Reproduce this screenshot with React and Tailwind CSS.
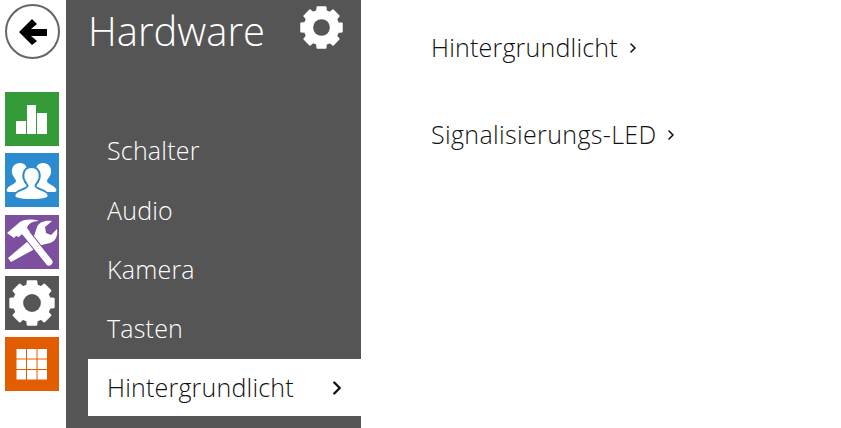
import { ChevronRight } from 'lucide-react';

// 8 tooth gear outline, centred on 27,27 in a 54 box
function gearPoints(outer, inner) {
  const pts = [];
  for (let i = 0; i < 8; i++) {
    const a = (i * Math.PI) / 4 - Math.PI / 2;
    [[-0.2, outer], [0.2, outer], [0.27, inner], [0.52, inner]].forEach(([d, r]) => {
      pts.push(`${(27 + r * Math.cos(a + d)).toFixed(2)},${(27 + r * Math.sin(a + d)).toFixed(2)}`);
    });
  }
  return pts.join(' ');
}

function Gear({ className, hole }) {
  return (
    <svg viewBox="0 0 54 54" className={className}>
      <polygon points={gearPoints(25, 20.5)} fill="#fff" stroke="#fff" strokeWidth="2" strokeLinejoin="round" />
      <circle cx="27" cy="27" r="10" fill={hole} />
    </svg>
  );
}

function Tile({ color, children }) {
  return <div className={`w-[54px] h-[54px] flex items-center justify-center ${color}`}>{children}</div>;
}

const menu = ['Schalter', 'Audio', 'Kamera', 'Tasten'];

export default function App() {
  return (
    <div className="flex w-[841px] h-[428px] bg-white overflow-hidden font-['Open_Sans',sans-serif] font-light">
      <div className="w-[66px] shrink-0 pl-[5px] pt-[4px]">
        <div className="w-[55px] h-[55px] rounded-full border-2 border-[#666666] flex items-center justify-center">
          <svg viewBox="0 0 28 28" className="w-[28px] h-[28px]">
            <path fill="#000" d="M0 14 13 1l5 5-6 5h16v7H12l6 5-5 4z" />
          </svg>
        </div>
        <div className="flex flex-col gap-[7.25px] mt-[33px]">
          <Tile color="bg-[#359b38]">
            <svg viewBox="0 0 54 54" className="w-[54px] h-[54px]">
              <path fill="#fff" d="M11 29h10v13H11zM22 13h9v29h-9zM32 21h10v21H32z" />
            </svg>
          </Tile>
          <Tile color="bg-[#2d8ccf]">
            <svg viewBox="0 0 54 54" className="w-[54px] h-[54px]">
              <g fill="#fff">
                <path d="M15 10c5 0 8 4 7 10-1 4-3 6-3 8 0 3 4 3 5 6l-6 5H4c-2 0-3-1-2-3 2-4 9-5 9-8 0-2-3-4-4-8-1-6 3-10 8-10z" />
                <path d="M38 10c-5 0-8 4-7 10 1 4 3 6 3 8 0 3-4 3-5 6l6 5h14c2 0 3-1 2-3-2-4-9-5-9-8 0-2 3-4 4-8 1-6-3-10-8-10z" />
                <path
                  stroke="#2d8ccf"
                  strokeWidth="2"
                  d="M26.500 14c6 0 9 5 8 11-1 4-4 6-4 8 0 3 12 4 13 9 1 3-4 5-17 5s-18-2-17-5c1-5 13-6 13-9 0-2-3-4-4-8-1-6 2-11 8-11z"
                />
              </g>
            </svg>
          </Tile>
          <Tile color="bg-[#7d4f9f]">
            <svg viewBox="0 0 54 54" className="w-[54px] h-[54px]">
              <path fill="#fff" d="M6 47l-3-4 26-22 3-9c2-5 8-7 15-6l-7 6 1 6 5 2 6-6c1 6-1 12-7 14-3 1-6 1-8 2z" />
              <path stroke="#7d4f9f" strokeWidth="9" d="M20 17l24 30" />
              <path stroke="#fff" strokeWidth="7" strokeLinecap="round" d="M20 17l24 30" />
              <path fill="#fff" d="M2 18 15 7c5-3 13-3 19-1-7 0-11 3-12 7l3 4-5 5-3-3-3 3-3-1-2 2z" />
            </svg>
          </Tile>
          <Tile color="bg-[#555555]">
            <Gear className="w-[48px] h-[48px]" hole="#555555" />
          </Tile>
          <Tile color="bg-[#e25d00]">
            <svg viewBox="0 0 54 54" className="w-[54px] h-[54px]">
              <path
                fill="#fff"
                d="M11.500 12h9.500v9.500h-9.500zM22 12h9.500v9.500H22zM32.500 12H42v9.500h-9.500zM11.500 22.500h9.500V32h-9.500zM22 22.500h9.500V32H22zM32.500 22.500H42V32h-9.500zM11.500 33h9.500v9.500h-9.500zM22 33h9.500v9.500H22zM32.500 33H42v9.500h-9.500z"
              />
            </svg>
          </Tile>
        </div>
      </div>

      <div className="w-[295px] shrink-0 bg-[#555555] text-white">
        <div className="flex items-center justify-between h-[62px] pl-[22px] pr-[17px]">
          <h1 className="text-[40px] font-light leading-none">Hardware</h1>
          <Gear className="w-[45px] h-[45px] mb-[8px]" hole="#555555" />
        </div>
        <ul className="mt-[59.5px] pl-[22px]">
          {menu.map((item) => (
            <li key={item} className="h-[59.3px] pl-[19px] flex items-center text-[25px] tracking-[0.2px]">
              {item}
            </li>
          ))}
          <li className="h-[57px] pl-[19px] pr-[13px] pt-[1px] flex items-center justify-between bg-white text-[#111111] text-[25px] tracking-[0.2px]">
            Hintergrundlicht
            <ChevronRight size={22} strokeWidth={2.6} />
          </li>
        </ul>
      </div>

      <div className="flex-1 pl-[70px] pt-[30px] text-[#111111] text-[25px]">
        <div className="flex items-center gap-[7px] h-[36px] tracking-[0.2px]">
          Hintergrundlicht
          <ChevronRight size={16} strokeWidth={2.4} />
        </div>
        <div className="flex items-center gap-[7px] h-[36px] mt-[51px] tracking-[0.35px]">
          Signalisierungs-LED
          <ChevronRight size={16} strokeWidth={2.4} />
        </div>
      </div>
    </div>
  );
}
